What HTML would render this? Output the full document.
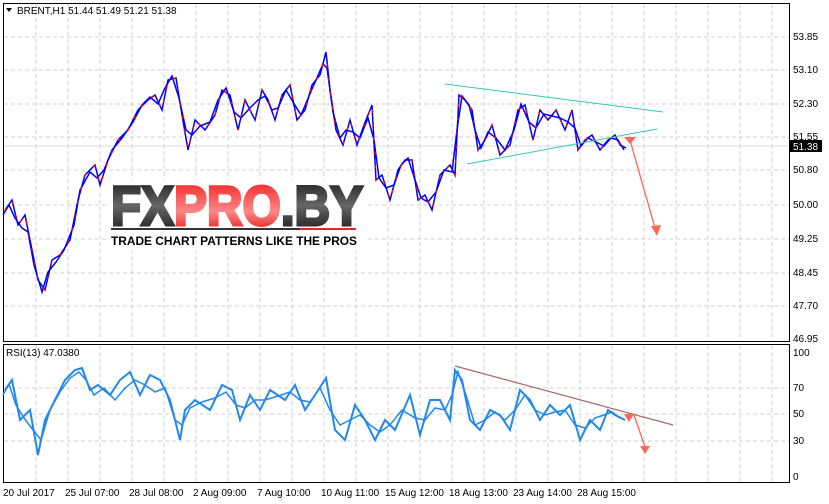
<!DOCTYPE html>
<html><head><meta charset="utf-8"><style>
html,body{margin:0;padding:0;background:#fff;width:829px;height:504px;overflow:hidden}
svg{display:block}
text{font-family:"Liberation Sans",sans-serif;font-size:10px;fill:#000}
</style></head><body>
<svg width="829" height="504" viewBox="0 0 829 504" xmlns="http://www.w3.org/2000/svg">
<g stroke="#d0d0d0" stroke-dasharray="4,3" stroke-width="1">
<path d="M4 37H789M4 70H789M4 104H789M4 137H789M4 170H789M4 205H789M4 239H789M4 273H789M4 306H789"/>
<path d="M4 388H789M4 414H789M4 441H789"/>
<path d="M36 4V341M68 4V341M100 4V341M132 4V341M164 4V341M196 4V341M228 4V341M260 4V341M292 4V341M324 4V341M356 4V341M388 4V341M420 4V341M452 4V341M484 4V341M516 4V341M548 4V341M580 4V341M612 4V341M644 4V341M676 4V341M708 4V341M740 4V341M772 4V341"/>
<path d="M36 345V482M68 345V482M100 345V482M132 345V482M164 345V482M196 345V482M228 345V482M260 345V482M292 345V482M324 345V482M356 345V482M388 345V482M420 345V482M452 345V482M484 345V482M516 345V482M548 345V482M580 345V482M612 345V482M644 345V482M676 345V482M708 345V482M740 345V482M772 345V482"/>
</g>
<path d="M4 146H789" stroke="#d8d8d8"/>
<rect x="3.5" y="3.5" width="786" height="338" fill="none" stroke="#000"/>
<rect x="3.5" y="344.5" width="786" height="138" fill="none" stroke="#000"/>
<g fill="none" stroke-width="1.5">
<polyline stroke="#0000ff" points="5,210 12,200 18,225 25,215 30,240 38,280 45,290 52,260 60,255 70,240 78,200 85,175 95,165 100,185 108,160 118,140 128,130 138,110 148,100 155,95 162,110 168,80 176,78 182,115 188,150 195,120 205,130 215,115 222,90 230,95 238,130 245,100 255,120 262,90 268,100 275,120 282,95 290,85 297,120 305,110 312,85 320,75 326,52 330,90 336,130 343,145 350,120 357,145 364,125 372,105 376,180 382,175 390,200 398,170 405,160 412,160 418,200 425,195 432,210 440,175 450,165 455,175 459,95 465,100 472,110 478,150 485,140 492,125 500,155 510,145 518,110 525,105 533,140 540,110 548,120 556,110 565,130 572,110 578,150 585,140 592,135 600,150 608,140 615,135 620,145 626,148"/>
<polyline stroke="#0000ff" points="3,215 9,205 15,218 22,228 28,232 34,265 42,292 48,272 56,262 64,250 74,225 80,190 90,172 97,178 104,170 112,150 122,138 133,122 142,105 150,97 158,104 165,88 172,76 179,98 186,130 192,135 200,126 210,122 218,100 226,88 234,112 241,118 250,108 258,100 265,96 272,110 278,108 286,90 293,102 301,115 309,96 316,80 323,64 327,68 333,112 340,138 346,130 353,132 360,138 368,118 374,140 379,178 386,188 394,185 401,165 408,158 415,180 421,198 428,202 436,192 444,170 452,172 457,130 462,96 469,105 475,130 481,148 488,132 496,138 505,150 514,130 521,104 529,122 536,128 544,114 552,116 560,118 568,122 575,128 581,146 588,138 596,142 604,146 611,138 618,140 624,150"/>
</g>
<g fill="none" stroke="#ff0000" stroke-width="1.5" stroke-dasharray="3,11">
<polyline points="5,210 12,200 18,225 25,215 30,240 38,280 45,290 52,260 60,255 70,240 78,200 85,175 95,165 100,185 108,160 118,140 128,130 138,110 148,100 155,95 162,110 168,80 176,78 182,115 188,150 195,120 205,130 215,115 222,90 230,95 238,130 245,100 255,120 262,90 268,100 275,120 282,95 290,85 297,120 305,110 312,85 320,75 326,52 330,90 336,130 343,145 350,120 357,145 364,125 372,105 376,180 382,175 390,200 398,170 405,160 412,160 418,200 425,195 432,210 440,175 450,165 455,175 459,95 465,100 472,110 478,150 485,140 492,125 500,155 510,145 518,110 525,105 533,140 540,110 548,120 556,110 565,130 572,110 578,150 585,140 592,135 600,150 608,140 615,135 620,145 626,148"/>
</g>
<path d="M445 84L663 112M467 164L657 129" stroke="#33ccaa" stroke-width="1"/>
<path d="M630 140L655 228" stroke="#ff6655" stroke-width="1.3"/>
<path d="M651 226L661 225L657 236Z M624 137L636 137L630 144Z" fill="#ff6655"/>
<g fill="none" stroke="#2288ee" stroke-width="2">
<polyline points="5,390 12,380 20,420 30,410 38,455 45,420 55,400 65,380 75,370 82,368 90,390 98,385 110,395 120,380 130,372 140,395 150,375 160,380 170,400 180,440 185,410 195,400 210,410 222,385 232,390 240,420 250,395 260,410 270,390 285,400 295,385 305,410 315,395 326,378 335,430 345,440 355,405 365,420 375,440 385,420 395,430 410,395 420,435 430,400 440,400 450,420 455,370 462,380 470,420 480,430 490,410 500,415 510,430 520,390 530,400 540,420 550,405 560,415 570,405 580,440 590,420 600,430 608,410 615,415 625,420"/>
<polyline stroke-width="1.5" points="3,395 9,384 16,405 24,418 33,430 41,440 50,410 60,392 70,378 79,372 86,380 94,395 104,388 115,400 125,388 135,380 145,385 155,392 165,388 175,420 182,425 190,408 202,402 215,398 226,392 236,405 245,408 255,400 265,400 278,396 290,392 300,400 310,402 320,388 330,410 340,425 350,420 360,415 370,425 380,432 390,425 402,410 415,418 425,420 435,408 445,410 452,395 458,372 466,395 475,425 485,420 495,412 505,420 515,410 525,395 535,410 545,415 555,412 565,410 575,425 585,428 595,418 604,415 612,412 620,418"/>
</g>
<path d="M455 366L673 425" stroke="#aa6666" stroke-width="1.2"/>
<path d="M634 415L645 447" stroke="#ff6655" stroke-width="1.3"/>
<path d="M640 446L650 446L645 454Z M624 414L634 414L629 422Z" fill="#ff6655"/>
<defs><linearGradient id="g" x1="0" y1="0" x2="0" y2="1"><stop offset="0" stop-color="#111"/><stop offset="0.5" stop-color="#666"/><stop offset="1" stop-color="#111"/></linearGradient>
<linearGradient id="r" x1="0" y1="0" x2="0" y2="1"><stop offset="0" stop-color="#ee1111"/><stop offset="0.6" stop-color="#ff8888"/><stop offset="1" stop-color="#dd0000"/></linearGradient></defs>
<rect x="106" y="180" width="262" height="70" fill="#fff"/>
<text x="111" y="225" style="font-size:56px;font-weight:bold;font-family:'Liberation Sans'" textLength="252" lengthAdjust="spacingAndGlyphs" stroke-width="3"><tspan fill="url(#g)" stroke="url(#g)">FX</tspan><tspan fill="url(#r)" stroke="url(#r)">PRO</tspan><tspan fill="url(#g)" stroke="url(#g)">.BY</tspan></text>
<path d="M111 229H300" stroke="#333" stroke-width="2"/><path d="M300 229H356" stroke="#e22" stroke-width="2"/>
<text x="111" y="245" style="font-size:12px;font-weight:bold;font-family:'Liberation Sans'" textLength="246" lengthAdjust="spacingAndGlyphs" fill="#222">TRADE CHART PATTERNS LIKE THE PROS</text>
<path d="M6 8L12 8L9 12Z" fill="#000"/>
<text x="17" y="14">BRENT,H1  51.44 51.49 51.21 51.38</text>
<text x="6" y="356">RSI(13) 47.0380</text>
<g>
<text x="793" y="40">53.85</text><text x="793" y="73">53.10</text><text x="793" y="107">52.30</text><text x="793" y="140">51.55</text><text x="793" y="173">50.80</text><text x="793" y="208">50.00</text><text x="793" y="242">49.25</text><text x="793" y="276">48.45</text><text x="793" y="309">47.70</text><text x="793" y="342">46.95</text>
<text x="793" y="356">100</text><text x="793" y="391">70</text><text x="793" y="417">50</text><text x="793" y="444">30</text><text x="793" y="480">0</text>
</g>
<rect x="790" y="140" width="32" height="12" fill="#000"/>
<text x="793" y="150" style="fill:#fff">51.38</text>
<g>
<text x="3" y="496">20 Jul 2017</text><text x="65" y="496">25 Jul 07:00</text><text x="129" y="496">28 Jul 08:00</text><text x="193" y="496">2 Aug 09:00</text><text x="257" y="496">7 Aug 10:00</text><text x="321" y="496">10 Aug 11:00</text><text x="385" y="496">15 Aug 12:00</text><text x="449" y="496">18 Aug 13:00</text><text x="513" y="496">23 Aug 14:00</text><text x="577" y="496">28 Aug 15:00</text>
</g>
</svg>
</body></html>
